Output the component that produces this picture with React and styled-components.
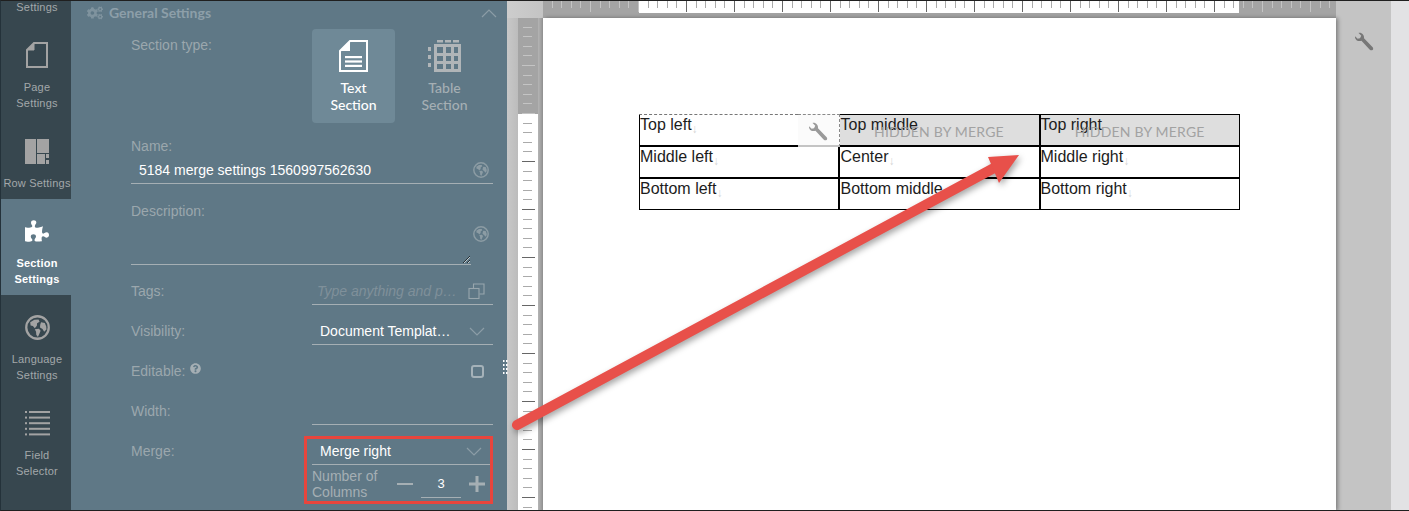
import React from 'react';
import styled, { createGlobalStyle } from 'styled-components';
import { FaPuzzlePiece, FaCogs, FaQuestionCircle } from 'react-icons/fa';

const Global = createGlobalStyle`
  html, body { margin: 0; padding: 0; background: #c6c6c6; }
  * { box-sizing: border-box; }
`;
const sans = `"Liberation Sans", Arial, sans-serif`;
const lato = `Lato, "Open Sans", sans-serif`;

const Frame = styled.div`
  position: relative; display: flex; width: 1409px; height: 511px; overflow: hidden;
  border-top: 1px solid #1f1f1f; border-bottom: 1px solid #1f1f1f; border-left: 1px solid #24323a;
  font-family: ${sans};
`;
const Rail = styled.nav`
  width: 70px; flex: none; background: #37474f; display: flex; flex-direction: column; overflow: hidden;
`;
const RailItem = styled.div`
  display: flex; flex-direction: column; align-items: center;
  padding: ${p => (p.$clipped ? '0' : '20px')} 0 8px 2px;
  margin-top: ${p => (p.$clipped ? '-2px' : '0')};
  background: ${p => (p.$active ? '#5f7886' : 'transparent')};
  color: ${p => (p.$active ? '#ffffff' : '#a3a8aa')};
  font-size: 11px; line-height: 16px; text-align: center; font-weight: ${p => (p.$active ? 700 : 400)};
`;
const RailIcon = styled.div`
  width: 26px; height: 26px; margin: -1px 0 11px; display: flex; align-items: center; justify-content: center;
  color: ${p => (p.$active ? '#ffffff' : '#a3a3a3')};
`;
const RailLabel = styled.span` display: block; white-space: pre-line; letter-spacing: .2px; `;

const Panel = styled.section`
  width: 436px; flex: none; background: #5f7886; padding-left: 60px; padding-right: 14px; position: relative;
  color: #9ba7ad;
`;
const Head = styled.header`
  height: 24px; margin-left: -44px; margin-right: -4px; display: flex; align-items: center; gap: 6px;
  font: 700 14px/24px ${lato}; color: #8d9fa9;
`;
const Caret = styled.span` margin-left: auto; display: flex; `;
const TypeRow = styled.div` display: grid; grid-template-columns: 181px 181px; margin-top: 4px; `;
const Label = styled.div` font-size: 14px; line-height: ${p => p.$lh || 20}px; color: #9ba7ad; `;
const Cards = styled.div` display: flex; gap: 8px; `;
const Card = styled.div`
  width: 83px; height: 94px; padding-top: 11px; border-radius: 4px; text-align: center;
  display: flex; flex-direction: column; align-items: center; gap: 7px;
  background: ${p => (p.$on ? '#6f8997' : 'transparent')};
  color: ${p => (p.$on ? '#ffffff' : '#a5afb4')};
  font: 500 14px/17px ${lato};
`;
const NameLabel = styled(Label)` margin-top: 13px; `;
const DescLabel = styled(Label)` margin-top: 17px; `;
const NameInput = styled.div`
  height: 27px; margin-top: 1px; display: flex; align-items: center; padding: 0 4px 0 8px; border-bottom: 1px solid #a5afb4;
  color: #fff; font-size: 14px;
`;
const GlobeSlot = styled.span` margin-left: auto; display: flex; color: #8c9ca4; `;
const DescRow = styled.div` display: flex; gap: 2px; height: 44px; `;
const Area = styled.textarea`
  width: 340px; height: 44px; background: transparent; border: 0; border-bottom: 1px solid #a5afb4; outline: none;
  padding: 0; margin: 0; display: block; resize: both;
`;
const DescGlobe = styled.span` margin-top: 5px; display: flex; color: #8c9ca4; `;
const Rows = styled.div` margin-top: 6px; `;
const Row = styled.div` display: grid; grid-template-columns: 181px 181px; height: ${p => p.$h || 40}px; `;
const RowLabel = styled(Label)` line-height: 40px; `;
const Control = styled.div`
  height: 27px; margin-top: 7px; display: flex; align-items: center; padding: 0 8px;
  border-bottom: ${p => (p.$bare ? 0 : '1px solid #a5afb4')}; color: #fff; font-size: 14px; white-space: nowrap;
`;
const Placeholder = styled.span` font-style: italic; color: #7f909a; margin-left: -3px; `;
const Right = styled.span` margin-left: auto; display: flex; color: #95a3aa; `;
const Check = styled.span`
  width: 13px; height: 13px; margin-left: auto; margin-right: 1px; border: 2px solid #a5b2b9; border-radius: 3px;
`;
const Help = styled(FaQuestionCircle)` margin-left: 5px; vertical-align: 2px; color: #a5afb4; `;
const MergeBox = styled.div`
  position: relative; width: 178px;
  &::before {
    content: ''; box-sizing: border-box; position: absolute; left: -8px; right: -3px; top: 5px; height: 68px;
    border: 3px solid #e8453d; pointer-events: none;
  }
`;
const ColsRow = styled.div` display: flex; align-items: flex-start; height: 36px; padding-top: 3px; `;
const ColsLabel = styled.div` width: 85px; font-size: 14px; line-height: 16px; color: #a5afb4; `;
const Stepper = styled.div` display: flex; align-items: center; height: 32px; `;
const Step = styled.svg` flex: none; `;
const StepValue = styled.div`
  width: 40px; margin: 0 8px; height: 27px; line-height: 26px; border-bottom: 1px solid #a5afb4; text-align: center;
  color: #fff; font-size: 13px;
`;
const Handle = styled.svg` position: absolute; left: 502px; top: 359px; `;

const Canvas = styled.main`
  flex: 1; display: grid; grid-template-columns: 11px 20px 5px 793px 55px 18px; grid-template-rows: 17px 1fr;
  background: #c6c6c6; position: relative; min-width: 0;
`;
const TopCell = styled.div` grid-column: 4; grid-row: 1; background: #a4a4a4; display: flex; `;
const TopLeftShade = styled.div` grid-column: 1 / 4; grid-row: 1; background: linear-gradient(90deg, #cdcdcd, #c4c4c4); `;
const LeftGutter = styled.div` grid-column: 1; grid-row: 2; background: linear-gradient(90deg, #c8c8c8, #bcbcbc); `;
const RulerV = styled.svg` grid-column: 2; grid-row: 2; display: block; `;
const ShadeBar = styled.div` grid-column: 3; grid-row: 2; background: linear-gradient(90deg, #b4b4b4, #969696); `;
const Sheet = styled.div`
  grid-column: 4; grid-row: 2; background: #fff; padding: 96px 96px 0;
  box-shadow: 2px 0 4px rgba(0,0,0,.35);
  position: relative;
`;
const ToolCol = styled.div` grid-column: 5; grid-row: 1 / 3; padding: 31px 0 0 18px; color: #777; background: #c4c4c4; `;
const Strip = styled.div` grid-column: 6; grid-row: 1 / 3; background: #e2e2e4; `;

const Table = styled.table`
  border-collapse: collapse; table-layout: fixed; width: 601px; font-size: 16px; color: #1c1c1c;
  border: 1px solid #000;
`;
const TRow = styled.tr`
  &:first-child td { height: 31px; }
  &:last-child td { border-bottom-width: 1px; height: 32px; }
`;
const Cell = styled.td`
  width: 200px; height: 32px; border: solid #000; border-width: 0 2px 2px 0; padding: 2px 0 0 0;
  vertical-align: top; line-height: 16px;
  position: relative; background: ${p => (p.$hidden ? '#dedede' : '#fff')};
  white-space: nowrap;
  &:first-child { width: 199px; }
  &:nth-child(2) { width: 201px; padding-left: 1px; }
  &:last-child { border-right-width: 1px; }
`;
const Mark = styled.span` color: #d4d4d4; font-size: 12px; vertical-align: -3px; `;
const Hidden = styled.span`
  position: absolute; left: 0; right: 0; top: 8px; text-align: center;
  font: 400 14px/17px ${lato}; color: #a2a2a2; letter-spacing: .2px;
`;
const Overlay = styled.span`
  position: absolute; top: -1px; right: -2px; bottom: -2px; width: 42px; background: #fbfbfb;
  border-top: 1px dashed #8a8a8a; border-right: 1px dashed #8a8a8a; border-bottom: 2px solid #c4c4c4;
  display: flex; align-items: center; justify-content: center; color: #9a9a9a; padding-top: 5px;
`;
const Selected = styled.span`
  position: absolute; left: -1px; top: -1px; right: 40px; height: 1px; background: #fff;
  border-top: 1px dashed #777;
`;
const Arrow = styled.svg`
  position: absolute; left: -1px; top: -1px; pointer-events: none; overflow: visible;
  filter: drop-shadow(2px 3px 3px rgba(0,0,0,.35));
`;

const Chevron = ({ up }) => (
  <svg width="16" height="9" viewBox="0 0 16 9" fill="none" stroke="#8c9da6" strokeWidth="1.2">
    <path d={up ? 'M1 8 L8 1 L15 8' : 'M1 1 L8 8 L15 1'} />
  </svg>
);
const Globe = ({ size = 16 }) => (
  <svg width={size} height={size} viewBox="0 0 24 24">
    <circle cx="12" cy="12" r="10.8" fill="none" stroke="currentColor" strokeWidth="2.2" />
    <path fill="currentColor" d="M5 7 L9 4.6 L13 4.4 L14 6.4 L11.6 8 L11.4 10.4 L9.4 12.6 L7.6 10.6 L5.4 10 Z" />
    <path fill="currentColor" d="M9.4 13.6 L13.4 13.2 L15 15 L13.8 18 L12.4 21 L10.8 19 L10.6 16 Z" />
    <path fill="currentColor" d="M15.4 7 L19 7.6 L20.4 11 L20.6 14 L18.4 16 L16.8 13.4 L14.4 12 L14.6 9.4 Z" />
  </svg>
);
const Wrench = ({ size = 22 }) => (
  <svg width={size} height={size} viewBox="0 0 22 22" fill="currentColor">
    <path d="M1.2 4.6 C0.6 7.6 3.4 10.6 7 9.8 L8.2 9.6 L17.4 19.4 C18.6 20.6 20.6 20.4 21 19 C21.4 17.8 20.8 17 20 16.2 L11 7 C11.6 3.4 8.6 0.4 5 1 L8 4.2 L6.6 6.8 L4 7.4 Z" />
  </svg>
);
const PageIcon = () => (
  <svg width="22" height="26" viewBox="0 0 22 26" fill="none" stroke="currentColor" strokeWidth="2">
    <path d="M8 1 H21 V25 H1 V8 Z" />
    <path d="M8 1 V8 H1" fill="currentColor" strokeWidth="1" />
  </svg>
);
const RowIcon = () => (
  <svg width="25" height="25" viewBox="0 0 25 25" fill="currentColor">
    <rect x="0" y="0" width="11" height="25" />
    <rect x="12" y="0" width="12" height="14" />
    <rect x="12" y="15" width="8" height="10" />
    <rect x="21" y="15" width="3" height="4" />
    <rect x="21" y="21" width="3" height="4" />
  </svg>
);
const ListIcon = () => (
  <svg width="25" height="25" viewBox="0 0 25 25" fill="currentColor">
    {[0, 1, 2, 3, 4].map(i => (
      <g key={i}>
        <rect x="0" y={i * 5.6} width="2" height="2" />
        <rect x="4" y={i * 5.6} width="21" height="2" />
      </g>
    ))}
  </svg>
);
const DocIcon = () => (
  <svg width="29" height="32" viewBox="0 0 29 32">
    <path d="M11 1 H28 V31 H1 V11 Z" fill="none" stroke="#fff" strokeWidth="2" />
    <path d="M1 11 L11 1 V11 Z" fill="#fff" />
    <rect x="6" y="16" width="17" height="2.2" fill="#fff" />
    <rect x="6" y="20.4" width="17" height="2.2" fill="#fff" />
    <rect x="6" y="24.8" width="17" height="2.2" fill="#fff" />
  </svg>
);
const TableIcon = () => (
  <svg width="33" height="32" viewBox="0 0 33 32" fill="#b0b5b8">
    <rect x="9" y="0" width="6" height="2.5" />
    <rect x="17" y="0" width="6" height="2.5" />
    <rect x="25" y="0" width="6" height="2.5" />
    {[7, 15, 23].map(y => <rect key={y} x="0" y={y} width="3" height="4" />)}
    <path fillRule="evenodd" d="M6 4 H33 V32 H6 Z M9 7 V13 H15 V7 Z M18 7 V13 H23 V7 Z M26 7 V13 H30 V7 Z M9 16 V21 H15 V16 Z M18 16 V21 H23 V16 Z M26 16 V21 H30 V16 Z M9 24 V29 H15 V24 Z M18 24 V29 H23 V24 Z M26 24 V29 H30 V24 Z" />
  </svg>
);
const CopyIcon = () => (
  <svg width="17" height="17" viewBox="0 0 17 17" fill="none" stroke="#98a6ad" strokeWidth="1.1">
    <rect x="1" y="5.5" width="10" height="10" />
    <path d="M5.5 5 V1 H16 V11 H11.5" />
  </svg>
);

const RulerTop = () => {
  const ticks = [];
  for (let i = 0; i <= 82; i++) ticks.push(i);
  return (
    <svg width="793" height="17" style={{ display: 'block' }}>
      <rect width="793" height="17" fill="#a4a4a4" />
      <rect x="96" width="600" height="12" fill="#fff" />
      {ticks.map(i => {
        const x = Math.round(-1 + i * 9.6) + 0.5;
        const long = i % 5 === 0;
        const inside = x > 96 && x < 696;
        return (
          <line key={i} x1={x} x2={x} y1="0" y2={long ? 11 : 7}
            stroke={inside ? (long ? '#666' : '#aaa') : '#c4c4c4'} />
        );
      })}
    </svg>
  );
};
const RulerLeft = () => {
  const ticks = [];
  for (let i = 0; i < 52; i++) ticks.push(i);
  return (
    <RulerV width="20" height="493">
      <rect width="20" height="493" fill="#fff" />
      <rect width="20" height="96" fill="#a4a4a4" />
      {ticks.map(i => {
        const y = Math.round(i * 9.6) - 0.5;
        const long = i % 5 === 0;
        const inside = y > 96;
        return (
          <line key={i} y1={y} y2={y} x1={long ? 4 : 5} x2={long ? 17 : 14}
            stroke={inside ? (long ? '#666' : '#aaa') : '#c4c4c4'} />
        );
      })}
    </RulerV>
  );
};

const nav = [
  { label: 'Settings', clipped: true },
  { label: 'Page\nSettings', icon: <PageIcon /> },
  { label: 'Row Settings', icon: <RowIcon /> },
  { label: 'Section\nSettings', icon: <FaPuzzlePiece size={24} />, active: true },
  { label: 'Language\nSettings', icon: <Globe size={25} /> },
  { label: 'Field\nSelector', icon: <ListIcon /> },
];

export default function App() {
  return (
    <>
      <Global />
      <Frame>
        <Rail>
          {nav.map(n => (
            <RailItem key={n.label} $active={n.active} $clipped={n.clipped}>
              {n.icon && <RailIcon $active={n.active}>{n.icon}</RailIcon>}
              <RailLabel>{n.label}</RailLabel>
            </RailItem>
          ))}
        </Rail>
        <Panel>
          <Head>
            <FaCogs size={16} color="#7f939e" />
            General Settings
            <Caret><Chevron up /></Caret>
          </Head>
          <TypeRow>
            <Label $lh={32}>Section type:</Label>
            <Cards>
              <Card $on><DocIcon /><span>Text<br />Section</span></Card>
              <Card><TableIcon /><span>Table<br />Section</span></Card>
            </Cards>
          </TypeRow>
          <NameLabel>Name:</NameLabel>
          <NameInput>5184 merge settings 1560997562630<GlobeSlot><Globe /></GlobeSlot></NameInput>
          <DescLabel>Description:</DescLabel>
          <DescRow>
            <Area />
            <DescGlobe><Globe /></DescGlobe>
          </DescRow>
          <Rows>
            <Row>
              <RowLabel>Tags:</RowLabel>
              <Control><Placeholder>Type anything and p…</Placeholder><Right><CopyIcon /></Right></Control>
            </Row>
            <Row>
              <RowLabel>Visibility:</RowLabel>
              <Control>Document Templat…<Right><Chevron /></Right></Control>
            </Row>
            <Row>
              <RowLabel>Editable:<Help size={11} /></RowLabel>
              <Control $bare><Check /></Control>
            </Row>
            <Row>
              <RowLabel>Width:</RowLabel>
              <Control />
            </Row>
            <Row $h={74}>
              <RowLabel>Merge:</RowLabel>
              <MergeBox>
                <Control>Merge right<Right><Chevron /></Right></Control>
                <ColsRow>
                  <ColsLabel>Number of Columns</ColsLabel>
                  <Stepper>
                    <Step width="16" height="16" viewBox="0 0 16 16" fill="#a5afb4"><rect y="7" width="16" height="2" /></Step>
                    <StepValue>3</StepValue>
                    <Step width="16" height="16" viewBox="0 0 16 16" fill="#a5afb4"><rect y="6.5" width="16" height="3" /><rect x="6.5" width="3" height="16" /></Step>
                  </Stepper>
                </ColsRow>
              </MergeBox>
            </Row>
          </Rows>
        </Panel>
        <Canvas>
          <TopLeftShade />
          <TopCell><RulerTop /></TopCell>
          <LeftGutter />
          <RulerLeft />
          <ShadeBar />
          <Sheet>
            <Table>
              <tbody>
                <TRow>
                  <Cell>Top left<Mark>↓</Mark><Selected /><Overlay><Wrench size={20} /></Overlay></Cell>
                  <Cell $hidden>Top middle<Hidden>HIDDEN BY MERGE</Hidden></Cell>
                  <Cell $hidden>Top right<Hidden>HIDDEN BY MERGE</Hidden></Cell>
                </TRow>
                <TRow>
                  <Cell>Middle left<Mark>↓</Mark></Cell>
                  <Cell>Center<Mark>↓</Mark></Cell>
                  <Cell>Middle right<Mark>↓</Mark></Cell>
                </TRow>
                <TRow>
                  <Cell>Bottom left<Mark>↓</Mark></Cell>
                  <Cell>Bottom middle<Mark>↓</Mark></Cell>
                  <Cell>Bottom right<Mark>↓</Mark></Cell>
                </TRow>
              </tbody>
            </Table>
          </Sheet>
          <ToolCol><Wrench size={20} /></ToolCol>
          <Strip />
        </Canvas>
        <Handle width="5" height="16" viewBox="0 0 5 16" fill="#fff">
          {[0, 4, 8, 12].map(y => (
            <g key={y}><rect x="0" y={y} width="1.5" height="2" /><rect x="3" y={y} width="1.5" height="2" /></g>
          ))}
        </Handle>
        <Arrow width="1409" height="511" viewBox="0 0 1409 511">
          <path d="M517 425 L994 168" stroke="#e8504a" strokeWidth="10" strokeLinecap="round" fill="none" />
          <path d="M988 157 L1019 155 L999 183 Z" fill="#e8504a" />
        </Arrow>
      </Frame>
    </>
  );
}
